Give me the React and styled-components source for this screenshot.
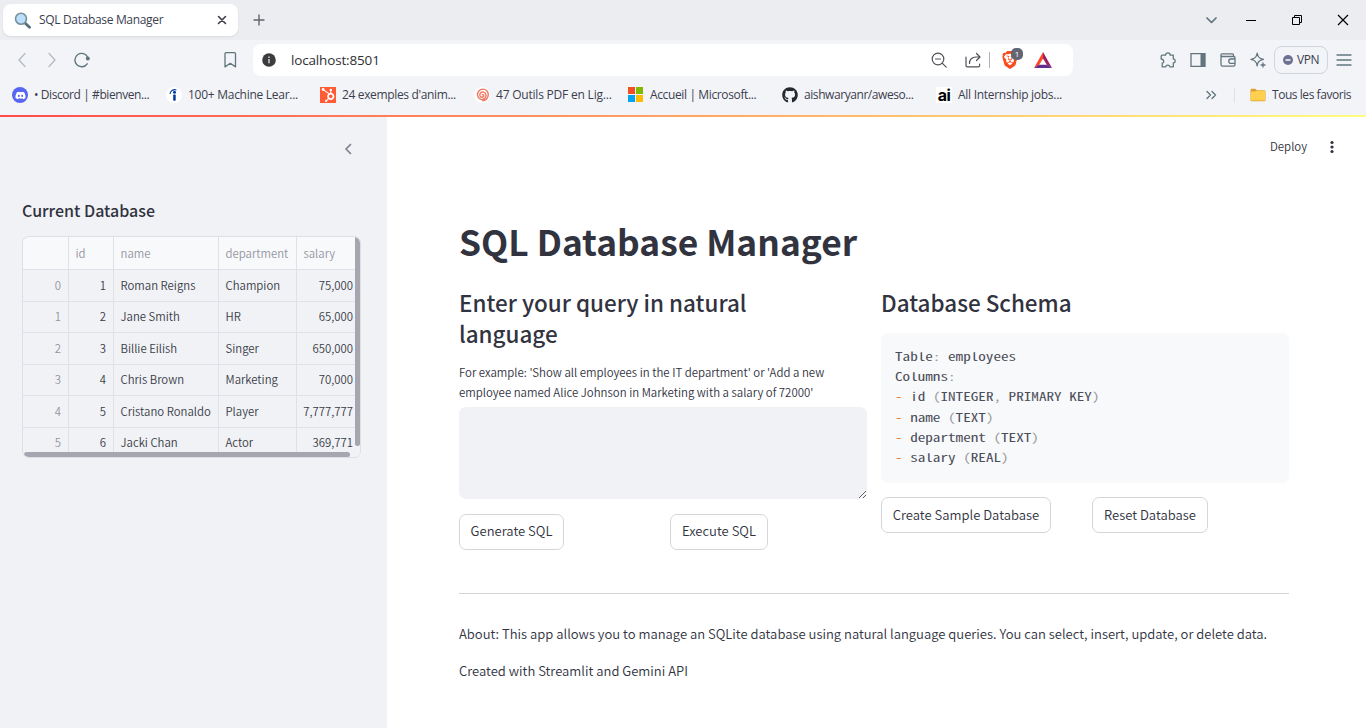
import React from 'react';
import styled, { createGlobalStyle } from 'styled-components';
import { FaDiscord, FaHubspot, FaGithub } from 'react-icons/fa';
import { FaBrave } from 'react-icons/fa6';

const UI = `"Open Sans", "Noto Sans", sans-serif`;
const SOURCE = `"Noto Sans CJK SC", "Noto Sans", sans-serif`;
const MONO = `"Noto Sans Mono CJK SC", "Liberation Mono", monospace`;

const GlobalStyle = createGlobalStyle`
  * { box-sizing: border-box; }
  body { margin: 0; background: #fff; overflow: hidden; }
  button, textarea { font: inherit; }
  svg { display: block; flex: none; }
`;

const Window = styled.div`
  width: 1366px;
  height: 728px;
  display: flex;
  flex-direction: column;
  overflow: hidden;
  font-family: ${UI};
  color: #303134;
`;

/* ---------- browser chrome ---------- */

const TabStrip = styled.div`
  height: 40px;
  flex: none;
  display: flex;
  align-items: center;
  padding: 0 17px 0 3px;
  background: #ecedf1;
`;

const Tab = styled.div`
  width: 235px;
  height: 32px;
  display: flex;
  align-items: center;
  padding: 0 11px;
  border-radius: 8px;
  background: #fff;
  box-shadow: 0 1px 2px rgba(0, 0, 0, 0.08);
`;

const Label = styled.span`
  font-size: ${(p) => p.$size || 12}px;
  letter-spacing: ${(p) => p.$track || 0}px;
  line-height: 16px;
  white-space: nowrap;
  color: ${(p) => p.$color || '#3b3e4f'};
`;

const TabTitle = styled(Label)`
  flex: 1;
  margin-left: 8px;
`;

const NewTab = styled.div`
  margin-left: 15px;
  flex: 1;
`;

const WindowControls = styled.div`
  display: flex;
  align-items: center;
  gap: 34px;

  > :first-child {
    margin-right: -8px;
  }
`;

const Toolbar = styled.div`
  height: 40px;
  flex: none;
  display: flex;
  align-items: center;
  padding: 0 14px 0 14px;
  background: #f3f4f7;
`;

const NavIcons = styled.div`
  width: 239px;
  display: flex;
  align-items: center;
  gap: 14px;
`;

const BookmarkSlot = styled.div`
  margin-left: auto;
  margin-right: 15px;
`;

const AddressBar = styled.div`
  width: 820px;
  height: 32px;
  display: flex;
  align-items: center;
  padding: 0 21px 0 8px;
  border-radius: 8px;
  background: #fff;
`;

const Address = styled(Label)`
  flex: 1;
  margin-left: 14px;
`;

const ShieldDivider = styled.div`
  width: 1px;
  height: 16px;
  margin: 0 11px 0 8px;
  background: #aeb1b8;
`;

const Shield = styled.div`
  position: relative;
  margin-right: 15px;
  color: #fb4a1b;
`;

const ShieldBadge = styled.span`
  position: absolute;
  left: 10px;
  top: -3px;
  width: 12px;
  height: 12px;
  border-radius: 5px;
  background: #626673;
  color: #fff;
  font-size: 8px;
  line-height: 12px;
  text-align: center;
`;

const ToolIcons = styled.div`
  margin-left: auto;
  display: flex;
  align-items: center;
`;

const IconGap = styled.div`
  margin-right: ${(p) => p.$right}px;
`;

const VpnButton = styled.div`
  width: 54px;
  height: 28px;
  display: flex;
  align-items: center;
  justify-content: center;
  gap: 4px;
  margin-right: 8px;
  border: 1px solid #ced5dc;
  border-radius: 8px;
`;

const BookmarksBar = styled.div`
  height: 35px;
  flex: none;
  display: flex;
  align-items: center;
  padding: 0 15px 5px 12px;
  background: #f3f4f7;
`;

const Bookmark = styled.div`
  width: 154px;
  display: flex;
  align-items: center;
  gap: 6px;
`;

const SiteIcon = styled.div`
  width: 16px;
  height: 16px;
  flex: none;
  display: flex;
  align-items: center;
  justify-content: center;
  border-radius: ${(p) => p.$radius || 0}px;
  background: ${(p) => p.$bg || 'transparent'};
  color: ${(p) => p.$fg || '#fff'};
`;

const AiMark = styled.span`
  font: bold 16px/20px Inter, sans-serif;
  letter-spacing: -0.6px;
`;

const BookmarksEnd = styled.div`
  margin-left: auto;
  display: flex;
  align-items: center;
`;

const FavouritesFolder = styled.div`
  display: flex;
  align-items: center;
  gap: 6px;
`;

const BarDivider = styled.div`
  width: 1px;
  height: 15px;
  margin: 0 15px 0 17px;
  background: #dfe1e6;
`;

const Rainbow = styled.div`
  height: 2px;
  flex: none;
  background: linear-gradient(90deg, #ff4b4b, #fffd80);
`;

/* ---------- page ---------- */

const Page = styled.div`
  flex: 1;
  min-height: 0;
  display: flex;
  font-family: ${SOURCE};
  font-weight: 350;
  color: #31333f;
`;

const Sidebar = styled.aside`
  width: 387px;
  flex: none;
  padding: 23px 27px 0 22px;
  background: #f0f2f6;
`;

const CollapseRow = styled.div`
  height: 18px;
  display: flex;
  justify-content: flex-end;
  align-items: center;
  padding-right: 7px;
`;

const SidebarTitle = styled.h3`
  margin: 41px 0 15px;
  height: 22px;
  line-height: 22px;
  font-size: 16px;
  font-weight: 500;
`;

const GridFrame = styled.div`
  position: relative;
  width: 339px;
  height: 222px;
  border: 1px solid #dddfe5;
  border-radius: 7px;
  overflow: hidden;
`;

const GridRow = styled.div`
  display: grid;
  grid-template-columns: 46px 45px 105px 78px 64px;
  height: 31.5px;
  background: ${(p) => (p.$head ? '#f8f9fb' : 'transparent')};
`;

const Cell = styled.div`
  padding: ${(p) => (p.$right ? '0 7px 0 0' : '0 0 0 6.5px')};
  text-align: ${(p) => (p.$right ? 'right' : 'left')};
  border-right: 1px solid #dfe1e7;
  border-bottom: 1px solid #dfe1e7;
  font-size: 11.38px;
  line-height: 32px;
  white-space: nowrap;
  color: ${(p) => (p.$muted ? '#9495a0' : '#3a3c47')};
`;

const VScroll = styled.div`
  position: absolute;
  right: 0;
  top: 0;
  width: 5px;
  height: 209px;
  border-radius: 0 3px 3px 3px;
  background: #a5a6af;
`;

const HScroll = styled.div`
  position: absolute;
  left: 0;
  bottom: 0;
  width: 338px;
  height: 5px;
  background: #f0f2f6;
  &::before {
    content: '';
    display: block;
    width: 326px;
    height: 5px;
    margin-left: 1px;
    border-radius: 3px;
    background: #a5a6af;
  }
`;

const Main = styled.main`
  flex: 1;
  background: #fff;
`;

const AppHeader = styled.header`
  height: 60px;
  display: flex;
  align-items: center;
  justify-content: flex-end;
  gap: 22px;
  padding-right: 31px;
  font-size: 11.43px;
`;

const DeployLabel = styled.span`
  padding-bottom: 2px;
`;

const Content = styled.div`
  width: 830px;
  margin: 40px 0 0 72px;
`;

const Title = styled.h1`
  margin: 0;
  height: 48px;
  line-height: 48px;
  font-size: 35.35px;
  font-weight: 700;
`;

const Columns = styled.div`
  display: grid;
  grid-template-columns: 408px 408px;
  gap: 14px;
  margin-top: 22px;
`;

const SectionTitle = styled.h2`
  margin: 0;
  line-height: 31px;
  font-size: 22.45px;
  font-weight: 500;
`;

const FieldLabel = styled.label`
  display: block;
  margin-top: 13px;
  font-size: 11.43px;
  line-height: 20px;
  white-space: pre-line;
`;

const QueryInput = styled.textarea`
  display: block;
  width: 408px;
  height: 92px;
  margin-top: 5px;
  border: 0;
  border-radius: 7px;
  background: #f0f2f6;
  resize: vertical;
`;

const ButtonRow = styled.div`
  display: grid;
  grid-template-columns: 197px 197px;
  gap: 14px;
  justify-items: start;
  margin-top: ${(p) => p.$top}px;
`;

const ActionButton = styled.button`
  width: ${(p) => p.$w}px;
  height: 36px;
  padding: 0 0 ${(p) => p.$lift || 0}px;
  border: 1px solid #d6d6d9;
  border-radius: 7px;
  background: #fff;
  color: #31333f;
  font-size: 13.04px;
  line-height: 32px;
  white-space: nowrap;
`;

const CodeBlock = styled.pre`
  margin: 15px 0 0;
  height: 150px;
  padding: 13px 14px;
  border-radius: 7px;
  background: #f8f9fb;
`;

const Code = styled.code`
  display: inline-block;
  font-family: ${MONO};
  font-weight: 300;
  font-size: 11.3px;
  line-height: 20.2px;
  color: #4b4d59;
  transform: scaleX(1.34);
  transform-origin: left top;
`;

const Punct = styled.span`
  color: #999;
`;

const Dash = styled.span`
  color: #ed6f13;
`;

const Rule = styled.hr`
  height: 1px;
  margin: 43px 0 28px;
  border: 0;
  background: #d6d6d9;
`;

const Paragraph = styled.p`
  margin: 0 0 14px;
  font-size: 13.04px;
  line-height: 23px;
  white-space: nowrap;
`;

const Stroke = ({ w = 16, h = 16, color = '#62757e', sw = 1.3, children }) => (
  <svg width={w} height={h} viewBox={`0 0 ${w} ${h}`} fill="none" stroke={color} strokeWidth={sw} strokeLinecap="round" strokeLinejoin="round">
    {children}
  </svg>
);

const Magnifier = () => (
  <svg width="17" height="17" viewBox="0 0 17 17">
    <path d="M11 11l4.5 4.3" stroke="#546e7a" strokeWidth="2.8" strokeLinecap="round" />
    <circle cx="7" cy="6.8" r="5.5" fill="#bbdefb" stroke="#78909c" strokeWidth="1.6" />
  </svg>
);

const SpiralMark = () => (
  <svg width="16" height="16" viewBox="0 0 16 16" fill="none" stroke="#ee7763" strokeWidth="1.4">
    <circle cx="8" cy="8" r="8" fill="#fff" stroke="none" />
    <path d="M8 8.300c.4-1.200 2-.7 1.800.7-.4 1.800-3.300 1.700-3.900-.3-.6-2.400 1.500-4.200 3.700-3.500 3 .9 3.300 4.700 1 6.400-2.700 2-6.500.3-7.100-3.100-.5-3.500 2.200-6.400 5.500-6.400 3 0 5.300 2.500 5.300 5.500 0 3.300-2.500 6.200-6 6.300" />
  </svg>
);

const IndeedMark = () => (
  <svg width="16" height="16" viewBox="0 0 16 16">
    <circle cx="8" cy="8" r="8" fill="#fff" />
    <circle cx="8.500" cy="5.300" r="1.500" fill="#003a9b" />
    <rect x="7.200" y="7.500" width="2.500" height="6.300" rx=".8" fill="#003a9b" />
    <path d="M4 7c.4-2.800 3-5.200 6.400-4" fill="none" stroke="#003a9b" strokeWidth="1.100" />
  </svg>
);

const MicrosoftMark = () => (
  <svg width="16" height="16" viewBox="0 0 16 16">
    <path d="M0 0h7v7H0z" fill="#f25022" />
    <path d="M8 0h7v7H8z" fill="#7fba00" />
    <path d="M0 8h7v7H0z" fill="#00a4ef" />
    <path d="M8 8h7v7H8z" fill="#ffb900" />
  </svg>
);

const Triangle = () => (
  <svg width="18" height="16" viewBox="0 0 18 16">
    <path d="M9 0L0 16l5-3 4-6.500z" fill="#ff4724" />
    <path d="M9 0l9 16-5-3-4-6.500z" fill="#9e1f63" />
    <path d="M0 16h18l-5-3.200H5z" fill="#662d91" />
  </svg>
);

const Folder = () => (
  <svg width="16" height="14" viewBox="0 0 16 14">
    <path d="M.5 2.200C.5 1.200 1 .7 2 .7h3.300l1.500 1.500H14c1 0 1.500.5 1.500 1.500v8.100c0 1-.5 1.500-1.500 1.500H2c-1 0-1.500-.5-1.500-1.500z" fill="#dca030" />
    <path d="M.8 4.800c0-.8.400-1.200 1.200-1.200h3.500L7 2.700h7c.8 0 1.200.4 1.200 1.200v7.500c0 .8-.4 1.100-1.200 1.100H2c-.8 0-1.200-.3-1.200-1.100z" fill="#ffd04e" />
  </svg>
);

const bookmarks = [
  { text: '• Discord | #bienven...', track: -0.42, icon: <SiteIcon $bg="#5865f2" $radius={8}><FaDiscord size={11} /></SiteIcon> },
  { text: '100+ Machine Lear...', track: -0.27, icon: <SiteIcon><IndeedMark /></SiteIcon> },
  { text: "24 exemples d'anim...", track: -0.35, icon: <SiteIcon $bg="#ff5c35"><FaHubspot size={14} /></SiteIcon> },
  { text: '47 Outils PDF en Lig...', track: -0.21, icon: <SiteIcon><SpiralMark /></SiteIcon> },
  { text: 'Accueil | Microsoft...', track: -0.37, icon: <SiteIcon><MicrosoftMark /></SiteIcon> },
  { text: 'aishwaryanr/aweso...', track: -0.43, icon: <SiteIcon $fg="#24292f"><FaGithub size={16} /></SiteIcon> },
  { text: 'All Internship jobs...', track: -0.28, icon: <SiteIcon $bg="#fff" $fg="#000"><AiMark>ai</AiMark></SiteIcon> },
];

const employees = [
  ['Roman Reigns', 'Champion', '75,000'],
  ['Jane Smith', 'HR', '65,000'],
  ['Billie Eilish', 'Singer', '650,000'],
  ['Chris Brown', 'Marketing', '70,000'],
  ['Cristano Ronaldo', 'Player', '7,777,777'],
  ['Jacki Chan', 'Actor', '369,771'],
];

const schema = [
  ['id', 'INTEGER, PRIMARY KEY'],
  ['name', 'TEXT'],
  ['department', 'TEXT'],
  ['salary', 'REAL'],
];

function BrowserChrome() {
  return (
    <>
      <TabStrip>
        <Tab>
          <Magnifier />
          <TabTitle $track={-0.33}>SQL Database Manager</TabTitle>
          <Stroke w={10} h={10} color="#3b3e44" sw={1.6}><path d="M1.500 1.500l7 7M8.500 1.500l-7 7" /></Stroke>
        </Tab>
        <NewTab>
          <Stroke w={12} h={12} color="#62666e" sw={1.4}><path d="M6 1v10M1 6h10" /></Stroke>
        </NewTab>
        <WindowControls>
          <Stroke w={12} h={10} sw={1.7}><path d="M2 3l4.500 4.500L11 3" /></Stroke>
          <svg width="14" height="10" viewBox="0 0 14 10"><path d="M3 5.500h10" stroke="#000" /></svg>
          <svg width="12" height="12" viewBox="0 0 12 12" fill="none" stroke="#000"><path d="M1.500 3.500h7v7h-7zM3.500 3.500v-2h7v7h-2" /></svg>
          <svg width="12" height="12" viewBox="0 0 12 12"><path d="M1 1l10 10M11 1L1 11" stroke="#000" strokeWidth="1.200" /></svg>
        </WindowControls>
      </TabStrip>
      <Toolbar>
        <NavIcons>
          <Stroke color="#b4bbc1"><path d="M11 1.500L5 8l6 6.500" /></Stroke>
          <Stroke color="#b4bbc1"><path d="M5 1.500L11 8l-6 6.500" /></Stroke>
          <Stroke sw={1.400}><path d="M13.200 11.800A6.700 6.700 0 1 1 13.800 5.500" /><circle cx="13.800" cy="6.500" r="1.300" fill="#62757e" /></Stroke>
          <BookmarkSlot>
            <Stroke><path d="M3 1.500C3 1 3.500.7 4 .7h8.500c.600 0 1 .4 1 1v13.200l-5.200-3.600L3 14.900z" /></Stroke>
          </BookmarkSlot>
        </NavIcons>
        <AddressBar>
          <svg width="16" height="16" viewBox="0 0 16 16"><circle cx="8" cy="8" r="6.800" fill="#3c3c3e" /><path d="M7.200 7h1.600v4.300H7.200zM7.200 4.400h1.600v1.500H7.200z" fill="#c9c9ca" /></svg>
          <Address $size={13.5} $track={-0.16} $color="#303134">localhost:8501</Address>
          <IconGap $right={18}>
            <Stroke color="#505258" sw={1.200}><circle cx="7" cy="7" r="5.800" /><path d="M4.500 7h5M11.200 11.200l4 4" /></Stroke>
          </IconGap>
          <Stroke color="#505258" sw={1.200}><path d="M1 5v8.500c0 .8.5 1.300 1.300 1.300h11c.8 0 1.300-.5 1.300-1.300V12M4.500 11.500c0-4 2.500-6.500 6.500-6.500h4M11.500 1.500L15 5l-3.500 3.500" /></Stroke>
          <ShieldDivider />
          <Shield>
            <FaBrave size={18} />
            <ShieldBadge>1</ShieldBadge>
          </Shield>
          <Triangle />
        </AddressBar>
        <ToolIcons>
          <IconGap $right={14}>
            <Stroke><path d="M2.200 3.200h3.300c0-3 4.700-3 4.700 0h3.100v3.700c2.600.2 2.600 3.800 0 4v3.900h-3.500c-.2-2.300-3.800-2.300-4 0H2.200v-3.600c2.200-.4 2.200-3.900-1-4.200V4.200c0-.6.4-1 1-1z" /></Stroke>
          </IconGap>
          <IconGap $right={14}>
            <svg width="16" height="16" viewBox="0 0 16 16"><path d="M1 1.600h14v12.800H1z" fill="none" stroke="#62757e" strokeWidth="1.300" /><path d="M10.500 1.600H15v12.800h-4.500z" fill="#62757e" /></svg>
          </IconGap>
          <IconGap $right={14}>
            <Stroke><path d="M1 3.200v9.300c0 1.100.7 1.700 1.700 1.700h10.600c1 0 1.700-.6 1.700-1.700V5.700c0-.8-.5-1.200-1.200-1.200H2.200C.600 4.500.600 1.800 2.200 1.800h10.300c.7 0 1 .4 1 1v1.500M15 7h-4c-3 0-3 4.300 0 4.300h4" /></Stroke>
          </IconGap>
          <IconGap $right={8}>
            <Stroke><path d="M7.200 1.200C7.700 5 9 6.600 13.500 7.400 9 8.300 7.700 9.800 7.200 13.800 6.600 9.800 5.300 8.300 1 7.400 5.300 6.600 6.600 5 7.200 1.200zM13 11v4M11 13h4" /></Stroke>
          </IconGap>
          <VpnButton>
            <svg width="10" height="10" viewBox="0 0 10 10"><circle cx="5" cy="5" r="5" fill="#6f7194" /><path d="M2.500 4.200h5v1.600h-5z" fill="#f3f4f7" /></svg>
            <Label $track={-0.5}>VPN</Label>
          </VpnButton>
          <Stroke><path d="M1 3h14M1 8h14M1 13h14" /></Stroke>
        </ToolIcons>
      </Toolbar>
      <BookmarksBar>
        {bookmarks.map((b) => (
          <Bookmark key={b.text}>
            {b.icon}
            <Label $track={b.track}>{b.text}</Label>
          </Bookmark>
        ))}
        <BookmarksEnd>
          <Stroke w={12} h={10} sw={1.400}><path d="M2 1.500L5.500 5 2 8.500M7 1.500L10.500 5 7 8.500" /></Stroke>
          <BarDivider />
          <FavouritesFolder>
            <Folder />
            <Label $track={-0.45}>Tous les favoris</Label>
          </FavouritesFolder>
        </BookmarksEnd>
      </BookmarksBar>
      <Rainbow />
    </>
  );
}

function EmployeeGrid() {
  return (
    <GridFrame>
      <GridRow $head>
        <Cell />
        {['id', 'name', 'department', 'salary'].map((h) => <Cell key={h} $muted>{h}</Cell>)}
      </GridRow>
      {employees.map(([name, dept, salary], i) => (
        <GridRow key={name}>
          <Cell $right $muted>{i}</Cell>
          <Cell $right>{i + 1}</Cell>
          <Cell>{name}</Cell>
          <Cell>{dept}</Cell>
          <Cell $right>{salary}</Cell>
        </GridRow>
      ))}
      <HScroll />
      <VScroll />
    </GridFrame>
  );
}

export default function App() {
  return (
    <Window>
      <GlobalStyle />
      <BrowserChrome />
      <Page>
        <Sidebar>
          <CollapseRow>
            <Stroke w={9} h={12} color="#7f818c" sw={1.7}><path d="M6.500 1.500L2 6l4.500 4.500" /></Stroke>
          </CollapseRow>
          <SidebarTitle>Current Database</SidebarTitle>
          <EmployeeGrid />
        </Sidebar>
        <Main>
          <AppHeader>
            <DeployLabel>Deploy</DeployLabel>
            <svg width="6" height="14" viewBox="0 0 6 14" fill="#31333f"><circle cx="3" cy="2.500" r="1.600" /><circle cx="3" cy="7" r="1.600" /><circle cx="3" cy="11.500" r="1.600" /></svg>
          </AppHeader>
          <Content>
            <Title>SQL Database Manager</Title>
            <Columns>
              <div>
                <SectionTitle>Enter your query in natural<br />language</SectionTitle>
                <FieldLabel>
                  {"For example: 'Show all employees in the IT department' or 'Add a new\nemployee named Alice Johnson in Marketing with a salary of 72000'"}
                </FieldLabel>
                <QueryInput />
                <ButtonRow $top={15}>
                  <ActionButton $w={105} $lift={2}>Generate SQL</ActionButton>
                  <ActionButton $w={98} $lift={2}>Execute SQL</ActionButton>
                </ButtonRow>
              </div>
              <div>
                <SectionTitle>Database Schema</SectionTitle>
                <CodeBlock>
                  <Code>
                    Table<Punct>:</Punct> employees{'\n'}
                    Columns<Punct>:</Punct>
                    {schema.map(([col, type]) => (
                      <React.Fragment key={col}>
                        {'\n'}<Dash>-</Dash> {col} <Punct>(</Punct>
                        {type.split(',').map((part, i) => (
                          <React.Fragment key={part}>{i > 0 && <Punct>,</Punct>}{part}</React.Fragment>
                        ))}
                        <Punct>)</Punct>
                      </React.Fragment>
                    ))}
                  </Code>
                </CodeBlock>
                <ButtonRow $top={14}>
                  <ActionButton $w={170}>Create Sample Database</ActionButton>
                  <ActionButton $w={116}>Reset Database</ActionButton>
                </ButtonRow>
              </div>
            </Columns>
            <Rule />
            <Paragraph>About: This app allows you to manage an SQLite database using natural language queries. You can select, insert, update, or delete data.</Paragraph>
            <Paragraph>Created with Streamlit and Gemini API</Paragraph>
          </Content>
        </Main>
      </Page>
    </Window>
  );
}
